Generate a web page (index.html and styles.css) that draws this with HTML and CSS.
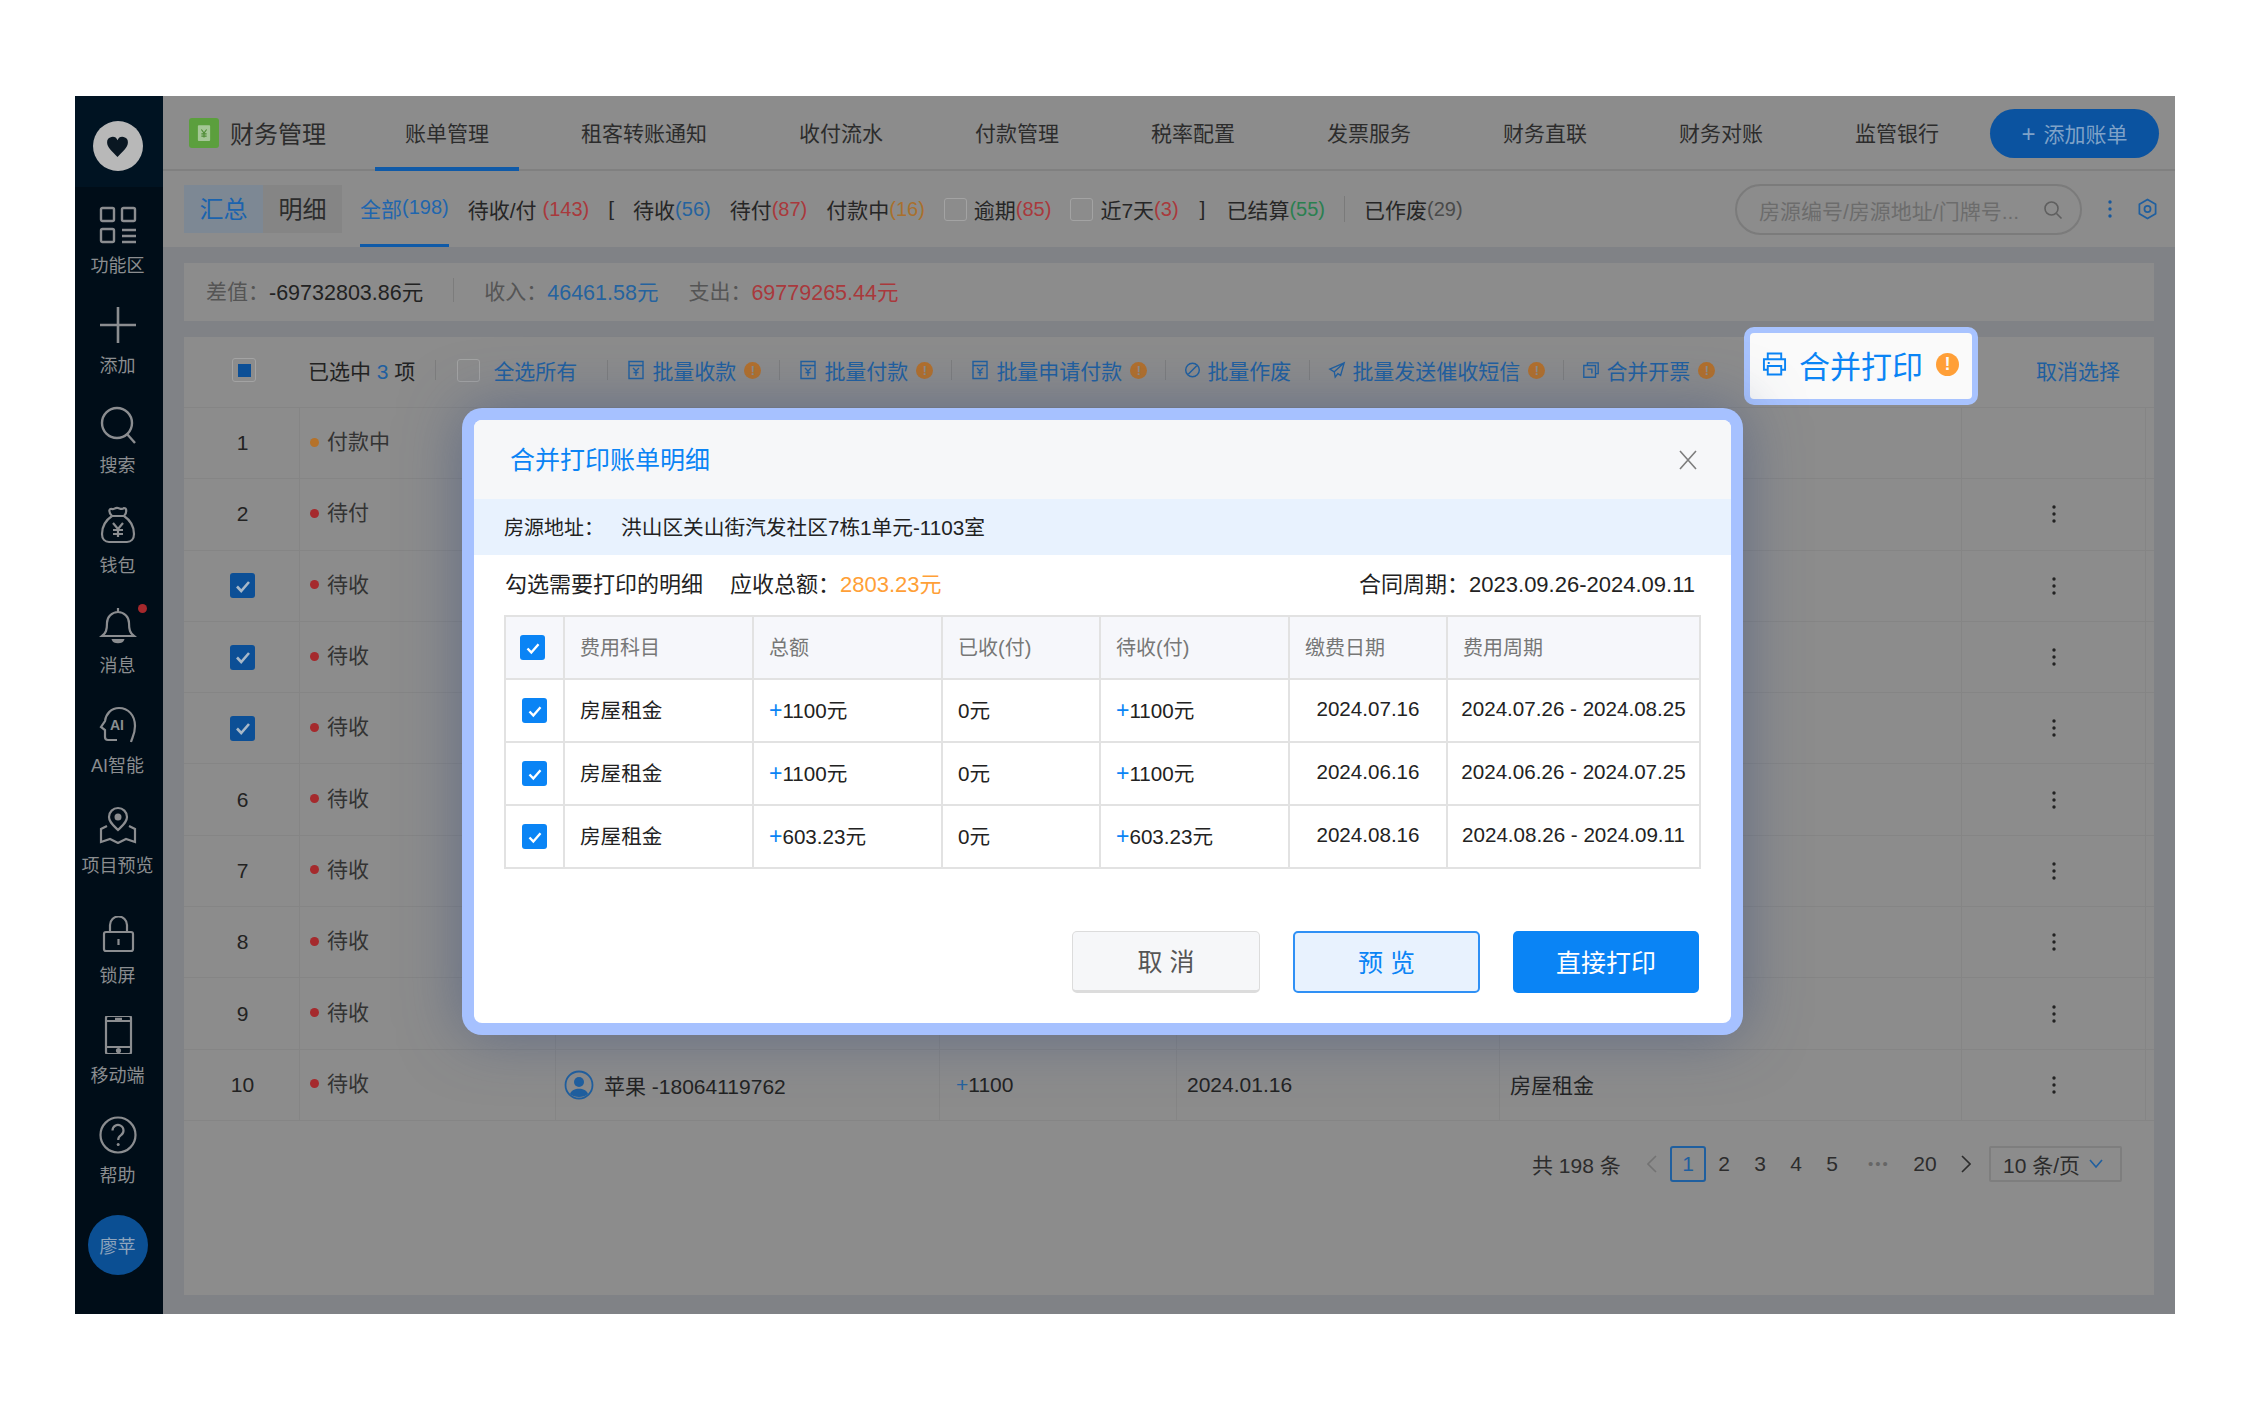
FILE: index.html
```html
<!doctype html>
<html>
  <head>
    <meta charset="utf-8">
    <title>财务管理 - 账单管理</title>
    <link rel="stylesheet" href="styles.css">
  </head>
  <body>
    <svg class="icon-defs">
      <symbol id="doc" viewBox="0 0 20 20"><path d="M3 1.500h14v17H3zM3 5.500h14M7 8l3 3 3-3M10 11v5M7.500 12.500h5" fill="none" stroke="currentColor" stroke-width="1.400"/></symbol>
      <symbol id="dots" viewBox="0 0 6 20"><circle cx="3" cy="3" r="1.700" fill="currentColor"/><circle cx="3" cy="10" r="1.700" fill="currentColor"/><circle cx="3" cy="17" r="1.700" fill="currentColor"/></symbol>
      <symbol id="tick" viewBox="0 0 24 24"><path d="M6 12.500l4.200 4.500L18 8" fill="none" stroke="currentColor" stroke-width="2.600"/></symbol>
    </svg>

    <div class="app">
      <aside class="sidebar">
        <div class="side-logo">
          <div class="logo-circle">
            <svg viewBox="0 0 24 24" width="25" height="25"><path d="M12 22C7 17 2 13 2 8a5.200 5.200 0 0 1 10-2 5.200 5.200 0 0 1 10 2c0 5-5 9-10 14z" fill="#0a1722"/></svg>
          </div>
        </div>
        <nav class="side-nav">
          <div class="side-item">
            <svg viewBox="0 0 38 38" width="38" height="38" fill="none" stroke="currentColor" stroke-width="2.400"><rect x="2" y="2" width="13" height="13" rx="1.500"/><rect x="23" y="2" width="13" height="13" rx="1.500"/><rect x="2" y="23" width="13" height="13" rx="1.500"/><path d="M23 24h14M23 30h14M23 36h14"/></svg>
            <span>功能区</span>
          </div>
          <div class="side-item">
            <svg viewBox="0 0 38 38" width="38" height="38" fill="none" stroke="currentColor" stroke-width="2.600"><path d="M19 1v36M1 19h36"/></svg>
            <span>添加</span>
          </div>
          <div class="side-item">
            <svg viewBox="0 0 38 38" width="38" height="38" fill="none" stroke="currentColor" stroke-width="2.400"><circle cx="18" cy="17" r="15"/><path d="M28 28l8 9"/></svg>
            <span>搜索</span>
          </div>
          <div class="side-item">
            <svg viewBox="0 0 38 38" width="38" height="38" fill="none" stroke="currentColor" stroke-width="2.200"><path d="M13 10C9 6 10 2 13 3c2 1 3-2 6-1s4 2 6 0c3 0 3 5 0 8M13 10h12M13 10C7 14 3 21 3 28c0 5 3 8 7 8h18c4 0 7-3 7-8 0-7-4-14-10-18"/><path d="M14 17l5 6 5-6M19 23v8M14 24h10M14 28h10"/></svg>
            <span>钱包</span>
          </div>
          <div class="side-item">
            <i class="side-badge"></i>
            <svg viewBox="0 0 38 38" width="38" height="38" fill="none" stroke="currentColor" stroke-width="2.200"><path d="M3 30c4-3 5-6 5-13a11 11 0 0 1 22 0c0 7 1 10 5 13zM19 2v4"/><path d="M14 34h10c-1 3-9 3-10 0z" fill="currentColor"/></svg>
            <span>消息</span>
          </div>
          <div class="side-item">
            <svg viewBox="0 0 38 38" width="38" height="38" fill="none" stroke="currentColor" stroke-width="2.200"><path d="M32 36c1-4 4-8 4-16C36 9 29 2 20 2 12 2 7 8 6 15l-4 6 4 3v7c0 2 1 3 3 3h9"/><text x="11" y="24" class="ai-text">AI</text></svg>
            <span>AI智能</span>
          </div>
          <div class="side-item">
            <svg viewBox="0 0 38 38" width="38" height="38" fill="none" stroke="currentColor" stroke-width="2.200"><path d="M19 24c-5-5-9-8-9-13a9 9 0 0 1 18 0c0 5-4 8-9 13z"/><circle cx="19" cy="11" r="2.400" fill="currentColor"/><path d="M8 20l-6 3v13l9-3 8 4 8-4 9 3V23l-6-3"/></svg>
            <span>项目预览</span>
          </div>
          <div class="side-item side-item-lock">
            <svg viewBox="0 0 38 38" width="38" height="38" fill="none" stroke="currentColor" stroke-width="2.200"><rect x="5" y="16" width="29" height="19" rx="2"/><path d="M11 16V9a8 8 0 0 1 17 0v7M19.500 23v6"/></svg>
            <span>锁屏</span>
          </div>
          <div class="side-item">
            <svg viewBox="0 0 38 38" width="38" height="38" fill="none" stroke="currentColor" stroke-width="2.200"><rect x="7" y="0" width="25" height="38" rx="2"/><path d="M7 5h25M7 31h25M16 2.800h7"/><circle cx="19.500" cy="34.500" r="1.500" fill="currentColor"/></svg>
            <span>移动端</span>
          </div>
          <div class="side-item">
            <svg viewBox="0 0 38 38" width="38" height="38" fill="none" stroke="currentColor" stroke-width="2.200"><circle cx="19" cy="19" r="17.500"/><path d="M13.500 14.500a5.500 5.500 0 1 1 8.500 4.600c-2 1.300-2.800 2.400-2.800 4.900"/><circle cx="19.200" cy="28.500" r="1.500" fill="currentColor" stroke="none"/></svg>
            <span>帮助</span>
          </div>
        </nav>
        <div class="avatar">廖苹</div>
      </aside>

      <main class="main">
        <header class="topbar">
          <div class="brand">
            <div class="brand-icon">
              <svg viewBox="0 0 16 20" width="14" height="18"><rect x="1" y="1" width="14" height="18" rx="1" fill="#a5c796"/><path d="M5 6l3 4 3-4M8 10v5M5 11h6M5 13.500h6" fill="none" stroke="#4f8c34" stroke-width="1.300"/></svg>
            </div>
            <span>财务管理</span>
          </div>
          <nav class="top-tabs">
            <a class="top-tab active">账单管理</a>
            <a class="top-tab">租客转账通知</a>
            <a class="top-tab">收付流水</a>
            <a class="top-tab">付款管理</a>
            <a class="top-tab">税率配置</a>
            <a class="top-tab">发票服务</a>
            <a class="top-tab">财务直联</a>
            <a class="top-tab">财务对账</a>
            <a class="top-tab">监管银行</a>
          </nav>
          <button class="add-button"><span class="add-plus">+</span>添加账单</button>
        </header>

        <section class="subbar">
          <div class="view-switch">
            <span class="view-btn active">汇总</span>
            <span class="view-btn">明细</span>
          </div>
          <div class="filters">
            <span class="filter active">全部<em>(198)</em></span>
            <span class="filter">待收/付<em class="red spaced">(143)</em></span>
            <span class="filter bracket-open">[</span>
            <span class="filter">待收<em class="blue">(56)</em></span>
            <span class="filter">待付<em class="red">(87)</em></span>
            <span class="filter">付款中<em class="orange">(16)</em></span>
            <span class="filter"><i class="check-empty small"></i>逾期<em class="red">(85)</em></span>
            <span class="filter"><i class="check-empty small"></i>近7天<em class="red">(3)</em></span>
            <span class="filter bracket-close">]</span>
            <span class="filter">已结算<em class="green">(55)</em></span>
            <span class="filter-line"></span>
            <span class="filter">已作废<em class="muted">(29)</em></span>
          </div>
          <div class="search">
            <span class="search-text">房源编号/房源地址/门牌号...</span>
            <svg viewBox="0 0 20 20" width="20" height="20" fill="none" stroke="#5f5f5f" stroke-width="1.600"><circle cx="8.500" cy="8.500" r="6.500"/><path d="M13.500 13.500l5 5"/></svg>
          </div>
          <svg class="more-blue" width="6" height="20"><use href="#dots"/></svg>
          <svg class="gear" viewBox="0 0 22 24" width="21" height="24" fill="none" stroke="#1f5f9f" stroke-width="1.800"><path d="M11 2l8.500 5v10L11 22l-8.500-5V7z" stroke-linejoin="round"/><circle cx="11" cy="12" r="3.200"/></svg>
        </section>

        <section class="stats">
          <span class="stat-label">差值：</span><span class="stat-value">-69732803.86元</span>
          <span class="stat-line"></span>
          <span class="stat-label">收入：</span><span class="stat-value blue">46461.58元</span>
          <span class="stat-label stat-gap">支出：</span><span class="stat-value red">69779265.44元</span>
        </section>

        <section class="bill-card">
          <div class="toolbar">
            <span class="check-some"><i></i></span>
            <span class="selected">已选中 <b>3</b> 项</span>
            <span class="tool-line first-line"></span>
            <span class="check-empty"></span>
            <span class="select-all">全选所有</span>
            <span class="tool-line all-line"></span>
            <span class="tool"><svg width="20" height="20"><use href="#doc"/></svg>批量收款<i class="warn">!</i></span>
            <span class="tool-line"></span>
            <span class="tool"><svg width="20" height="20"><use href="#doc"/></svg>批量付款<i class="warn">!</i></span>
            <span class="tool-line"></span>
            <span class="tool"><svg width="20" height="20"><use href="#doc"/></svg>批量申请付款<i class="warn">!</i></span>
            <span class="tool-line"></span>
            <span class="tool">
              <svg viewBox="0 0 20 20" width="17" height="20" fill="none" stroke="currentColor" stroke-width="1.700"><circle cx="10" cy="10" r="8"/><path d="M5 15L15 5"/></svg>批量作废
            </span>
            <span class="tool-line"></span>
            <span class="tool">
              <svg viewBox="0 0 20 20" width="18" height="20" fill="none" stroke="currentColor" stroke-width="1.500"><path d="M18 2L2 9l5 3 1 6 3-4 3 2zM7 12l11-10"/></svg>批量发送催收短信<i class="warn">!</i>
            </span>
            <span class="tool-line"></span>
            <span class="tool">
              <svg viewBox="0 0 20 20" width="18" height="20" fill="none" stroke="currentColor" stroke-width="1.500"><path d="M2 5h13v13H2zM6 5V2h12v12h-3M6 9h5v5"/></svg>合并开票<i class="warn">!</i>
            </span>
            <span class="cancel-select">取消选择</span>
            <div class="merge-print">
              <svg viewBox="0 0 26 26" width="25" height="26" fill="none" stroke="currentColor" stroke-width="2"><path d="M6 8V2h14v6M6 19H2V8h22v11h-4M6 15h14v9H6zM6 12h2"/></svg>
              <span>合并打印</span>
              <i class="warn big">!</i>
            </div>
          </div>

          <div class="bill-row"><div class="cell">1</div><div class="cell status"><i class="dot pay"></i>付款中</div><div class="cell"></div><div class="cell"></div><div class="cell"></div><div class="cell"></div><div class="cell"></div></div>
          <div class="bill-row"><div class="cell">2</div><div class="cell status"><i class="dot"></i>待付</div><div class="cell"></div><div class="cell"></div><div class="cell"></div><div class="cell"></div><div class="cell"><svg class="more" width="6" height="20"><use href="#dots"/></svg></div></div>
          <div class="bill-row"><div class="cell"><span class="check-dim"><svg width="24" height="24"><use href="#tick"/></svg></span></div><div class="cell status"><i class="dot"></i>待收</div><div class="cell"></div><div class="cell"></div><div class="cell"></div><div class="cell"></div><div class="cell"><svg class="more" width="6" height="20"><use href="#dots"/></svg></div></div>
          <div class="bill-row"><div class="cell"><span class="check-dim"><svg width="24" height="24"><use href="#tick"/></svg></span></div><div class="cell status"><i class="dot"></i>待收</div><div class="cell"></div><div class="cell"></div><div class="cell"></div><div class="cell"></div><div class="cell"><svg class="more" width="6" height="20"><use href="#dots"/></svg></div></div>
          <div class="bill-row"><div class="cell"><span class="check-dim"><svg width="24" height="24"><use href="#tick"/></svg></span></div><div class="cell status"><i class="dot"></i>待收</div><div class="cell"></div><div class="cell"></div><div class="cell"></div><div class="cell"></div><div class="cell"><svg class="more" width="6" height="20"><use href="#dots"/></svg></div></div>
          <div class="bill-row"><div class="cell">6</div><div class="cell status"><i class="dot"></i>待收</div><div class="cell"></div><div class="cell"></div><div class="cell"></div><div class="cell"></div><div class="cell"><svg class="more" width="6" height="20"><use href="#dots"/></svg></div></div>
          <div class="bill-row"><div class="cell">7</div><div class="cell status"><i class="dot"></i>待收</div><div class="cell"></div><div class="cell"></div><div class="cell"></div><div class="cell"></div><div class="cell"><svg class="more" width="6" height="20"><use href="#dots"/></svg></div></div>
          <div class="bill-row"><div class="cell">8</div><div class="cell status"><i class="dot"></i>待收</div><div class="cell"></div><div class="cell"></div><div class="cell"></div><div class="cell"></div><div class="cell"><svg class="more" width="6" height="20"><use href="#dots"/></svg></div></div>
          <div class="bill-row"><div class="cell">9</div><div class="cell status"><i class="dot"></i>待收</div><div class="cell"></div><div class="cell"></div><div class="cell"></div><div class="cell"></div><div class="cell"><svg class="more" width="6" height="20"><use href="#dots"/></svg></div></div>
          <div class="bill-row">
            <div class="cell">10</div>
            <div class="cell status"><i class="dot"></i>待收</div>
            <div class="cell text-cell tenant">
              <svg viewBox="0 0 30 30" width="30" height="30"><circle cx="15" cy="15" r="13.500" fill="none" stroke="#1f5f9f" stroke-width="1.800"/><circle cx="15" cy="12" r="5" fill="#1f5f9f"/><path d="M6 24c2-7 16-7 18 0-4 4-14 4-18 0z" fill="#1f5f9f"/></svg>
              苹果 -18064119762
            </div>
            <div class="cell text-cell money"><em class="blue">+</em>1100</div>
            <div class="cell text-cell date">2024.01.16</div>
            <div class="cell text-cell subject">房屋租金</div>
            <div class="cell"><svg class="more" width="6" height="20"><use href="#dots"/></svg></div>
          </div>

          <div class="pager">
            <span class="pager-total">共 198 条</span>
            <span class="pager-arrow dim">
              <svg viewBox="0 0 10 18" width="10" height="18" fill="none" stroke="currentColor" stroke-width="1.600"><path d="M9 1L1 9l8 8"/></svg>
            </span>
            <span class="page current">1</span>
            <span class="page">2</span>
            <span class="page">3</span>
            <span class="page">4</span>
            <span class="page">5</span>
            <span class="page ellipsis">•••</span>
            <span class="page wide">20</span>
            <span class="pager-arrow">
              <svg viewBox="0 0 10 18" width="10" height="18" fill="none" stroke="currentColor" stroke-width="1.600"><path d="M1 1l8 8-8 8"/></svg>
            </span>
            <span class="page-size">10 条/页
              <svg viewBox="0 0 14 10" width="14" height="10" fill="none" stroke="#1f5f9f" stroke-width="1.600"><path d="M1 1l6 7 6-7"/></svg>
            </span>
          </div>
        </section>
      </main>

      <div class="dialog">
        <div class="dialog-inner">
          <div class="dialog-head">
            <h2>合并打印账单明细</h2>
            <svg viewBox="0 0 20 20" width="20" height="20" fill="none" stroke="#7d7d7d" stroke-width="1.600"><path d="M2 1l16 18M18 1L2 19"/></svg>
          </div>
          <div class="dialog-address"><span>房源地址：</span><span class="address-value">洪山区关山街汽发社区7栋1单元-1103室</span></div>
          <div class="dialog-info">
            <span class="info-tip">勾选需要打印的明细</span>
            <span class="info-total">应收总额：<em>2803.23元</em></span>
            <span class="info-period">合同周期：2023.09.26-2024.09.11</span>
          </div>
          <table class="detail-table">
            <colgroup>
              <col class="col-check"><col class="col-wide"><col class="col-wide"><col class="col-mid"><col class="col-wide"><col class="col-mid"><col class="col-period">
            </colgroup>
            <thead>
              <tr>
                <th class="cb-cell head-cb"><span class="check-on"><svg width="22" height="22"><use href="#tick"/></svg></span></th>
                <th>费用科目</th><th>总额</th><th>已收(付)</th><th>待收(付)</th><th>缴费日期</th><th>费用周期</th>
              </tr>
            </thead>
            <tbody>
              <tr>
                <td class="cb-cell"><span class="check-on"><svg width="22" height="22"><use href="#tick"/></svg></span></td>
                <td>房屋租金</td><td><em class="plus">+</em>1100元</td><td>0元</td><td><em class="plus">+</em>1100元</td><td class="center">2024.07.16</td><td class="center">2024.07.26 - 2024.08.25</td>
              </tr>
              <tr>
                <td class="cb-cell"><span class="check-on"><svg width="22" height="22"><use href="#tick"/></svg></span></td>
                <td>房屋租金</td><td><em class="plus">+</em>1100元</td><td>0元</td><td><em class="plus">+</em>1100元</td><td class="center">2024.06.16</td><td class="center">2024.06.26 - 2024.07.25</td>
              </tr>
              <tr>
                <td class="cb-cell"><span class="check-on"><svg width="22" height="22"><use href="#tick"/></svg></span></td>
                <td>房屋租金</td><td><em class="plus">+</em>603.23元</td><td>0元</td><td><em class="plus">+</em>603.23元</td><td class="center">2024.08.16</td><td class="center">2024.08.26 - 2024.09.11</td>
              </tr>
            </tbody>
          </table>
          <div class="dialog-actions">
            <button class="btn btn-cancel">取 消</button>
            <button class="btn btn-preview">预 览</button>
            <button class="btn btn-print">直接打印</button>
          </div>
        </div>
      </div>
    </div>
  </body>
</html>
```

FILE: styles.css
```css
* {
  box-sizing: border-box;
}
body {
  margin: 0;
  padding: 96px 75px 0;
  background-color: #fff;
  font-family: "Liberation Sans", "Noto Sans CJK SC", sans-serif;
  font-size: 20px;
  color: #222;
}
em {
  font-style: normal;
}
i {
  font-style: normal;
}
.icon-defs {
  display: none;
}
.red {
  color: #a9393c;
}
.blue {
  color: #25639f;
}
.orange {
  color: #a9702d;
}
.green {
  color: #2a8050;
}
.muted {
  color: #4a4a4a;
}

.app {
  position: relative;
  display: flex;
  width: 2100px;
  height: 1218px;
  overflow: hidden;
}

/* sidebar */
.sidebar {
  flex: 0 0 88px;
  padding-right: 3px;
  background-color: #000d18;
  color: #8b8d90;
  display: flex;
  flex-direction: column;
  align-items: center;
}
.side-logo {
  width: 88px;
  height: 91px;
  margin-right: -3px;
  padding: 9px 3px 0 0;
  background-color: #001322;
  display: flex;
  align-items: center;
  justify-content: center;
}
.logo-circle {
  width: 50px;
  height: 50px;
  border-radius: 50%;
  background-color: #b8b8b8;
  display: flex;
  align-items: center;
  justify-content: center;
}
.side-nav {
  padding-top: 18px;
  width: 100%;
}
.side-item {
  position: relative;
  height: 100px;
  display: flex;
  flex-direction: column;
  align-items: center;
  gap: 10px;
  font-size: 18px;
  line-height: 24px;
  color: #8b8d90;
  white-space: nowrap;
}
.side-item svg {
  flex: 0 0 38px;
  margin-top: 1px;
}
.side-item-lock {
  margin-top: 10px;
}
.side-badge {
  position: absolute;
  top: -1px;
  left: 63px;
  width: 9px;
  height: 9px;
  border-radius: 50%;
  background-color: #a5282c;
}
.ai-text {
  font-size: 14px;
  font-weight: bold;
  fill: currentColor;
  stroke: none;
}
.avatar {
  width: 60px;
  height: 60px;
  border-radius: 50%;
  background-color: #0b4f93;
  color: #8fa5bd;
  font-size: 18px;
  display: flex;
  align-items: center;
  justify-content: center;
}

/* main area */
.main {
  flex: 1;
  background-color: #808286;
  display: flex;
  flex-direction: column;
  padding-bottom: 19px;
}
.topbar {
  height: 75px;
  background-color: #8c8c8c;
  border-bottom: 2px solid #808080;
  display: flex;
  align-items: center;
  padding-left: 26px;
  position: relative;
}
.brand {
  display: flex;
  align-items: center;
  gap: 11px;
  font-size: 24px;
  width: 186px;
  color: #2c2c2c;
}
.brand-icon {
  width: 30px;
  height: 30px;
  border-radius: 3px;
  background-color: #5b9f3d;
  display: flex;
  align-items: center;
  justify-content: center;
}
.top-tabs {
  display: flex;
  gap: 32px;
  height: 73px;
}
.top-tab {
  padding: 0 30px;
  font-size: 21px;
  line-height: 75px;
  height: 75px;
  color: #2c2c2c;
}
.top-tab.active {
  border-bottom: 4px solid #0f5aa8;
}
.add-button {
  position: absolute;
  right: 16px;
  top: 13px;
  width: 169px;
  height: 49px;
  padding-bottom: 3px;
  border: none;
  border-radius: 25px;
  background-color: #0b53a0;
  color: #7fa2c8;
  font-family: inherit;
  font-size: 21px;
}
.add-plus {
  margin-right: 8px;
  font-size: 24px;
}

.subbar {
  height: 76px;
  background-color: #8c8c8c;
  display: flex;
  align-items: center;
  padding-left: 21px;
  position: relative;
}
.view-switch {
  display: flex;
  height: 48px;
}
.view-btn {
  width: 79px;
  line-height: 50px;
  text-align: center;
  font-size: 24px;
  background-color: #858585;
  color: #2c2c2c;
}
.view-btn.active {
  background-color: #7d8894;
  color: #1a63ae;
}
.filters {
  display: flex;
  align-items: center;
  height: 76px;
  margin-left: 18px;
  gap: 19px;
  font-size: 21px;
  white-space: nowrap;
  color: #262626;
}
.filters em {
  font-size: 20px;
}
.filter {
  display: flex;
  align-items: center;
}
.filter em.spaced {
  margin-left: 6px;
}
.filter.active {
  color: #1f66ae;
  height: 76px;
  border-bottom: 3px solid #0f5aa8;
}
.bracket-close {
  padding: 0 2px;
}
.filter-line {
  width: 1px;
  height: 26px;
  background-color: #7a7a7a;
}
.check-empty {
  display: inline-block;
  flex: 0 0 23px;
  width: 23px;
  height: 23px;
  border: 1px solid #a3a3a3;
  border-radius: 3px;
  background-color: #8c8c8c;
}
.check-empty.small {
  margin-right: 7px;
}
.search {
  position: absolute;
  left: 1572px;
  top: 13px;
  width: 347px;
  height: 51px;
  border: 2px solid #7b7b7b;
  border-radius: 26px;
  display: flex;
  align-items: center;
  justify-content: space-between;
  padding: 0 17px 0 22px;
  color: #6c6c6c;
}
.search-text {
  font-size: 21px;
  white-space: nowrap;
}
.more-blue {
  position: absolute;
  left: 1944px;
  top: 28px;
  color: #17589c;
}
.gear {
  position: absolute;
  left: 1974px;
  top: 26px;
}

.stats {
  margin: 16px 21px 0 21px;
  height: 58px;
  padding: 0 0 4px 22px;
  background-color: #8c8c8c;
  display: flex;
  align-items: center;
  font-size: 21.500px;
  color: #222;
}
.stat-label {
  font-size: 21px;
  color: #555;
}
.stat-line {
  width: 1px;
  height: 24px;
  margin: 0 30px;
  background-color: #7c7c7c;
}
.stat-gap {
  margin-left: 30px;
}

/* table card */
.bill-card {
  flex: 1;
  margin: 16px 21px 0 21px;
  background-color: #8c8c8c;
}
.toolbar {
  position: relative;
  height: 71px;
  padding: 0 0 4px 48px;
  display: flex;
  align-items: center;
  font-size: 21px;
  color: #1f5f9f;
  white-space: nowrap;
  border-bottom: 1px solid #858585;
}
.check-some {
  width: 24px;
  height: 24px;
  border: 1px solid #a3a3a3;
  border-radius: 3px;
  display: flex;
  align-items: center;
  justify-content: center;
}
.check-some i {
  width: 13px;
  height: 13px;
  background-color: #0c4f96;
}
.selected {
  margin-left: 52px;
  color: #222;
}
.selected b {
  font-weight: normal;
  color: #1f5f9f;
}
.tool-line {
  width: 1px;
  height: 20px;
  margin: 0 18px;
  background-color: #7d7d7d;
}
.first-line {
  margin: 0 21px 0 20px;
}
.all-line {
  margin-left: 30px;
}
.select-all {
  margin-left: 13px;
}
.tool {
  display: flex;
  align-items: center;
  gap: 6px;
}
.warn {
  width: 17px;
  height: 17px;
  margin-left: 2px;
  border-radius: 50%;
  background-color: #b3702b;
  color: #8c8c8c;
  font-size: 13px;
  font-weight: bold;
  line-height: 17px;
  text-align: center;
}
.cancel-select {
  position: absolute;
  right: 34px;
}
.merge-print {
  position: absolute;
  left: 1560px;
  top: -10px;
  width: 234px;
  height: 78px;
  padding: 0 0 4px 12px;
  border: 6px solid #a8c3ff;
  border-radius: 10px;
  background-color: #fafafa;
  color: #0a84f5;
  display: flex;
  align-items: center;
  gap: 12px;
  font-size: 31px;
}
.warn.big {
  width: 23px;
  height: 23px;
  margin-left: 1px;
  background-color: #ff9f37;
  color: #fafafa;
  font-size: 18px;
  line-height: 23px;
}

.bill-row {
  display: grid;
  grid-template-columns: 116px 256px 384px 237px 323px 462px 184px;
  height: 71.300px;
  border-bottom: 1px solid #858585;
  font-size: 21px;
}
.cell {
  display: flex;
  align-items: center;
  justify-content: center;
  border-right: 1px solid #858585;
  color: #222;
}
.bill-row .cell:first-child {
  padding-left: 2px;
}
.status {
  justify-content: flex-start;
  padding-left: 10px;
  gap: 8px;
  color: #333;
  line-height: 22px;
  padding-bottom: 2px;
}
.dot {
  width: 9px;
  height: 9px;
  border-radius: 50%;
  background-color: #a52a2d;
}
.dot.pay {
  background-color: #b5722a;
}
.check-dim {
  width: 25px;
  height: 25px;
  border-radius: 3px;
  background-color: #0c4f96;
  color: #a8b8c8;
  display: flex;
  align-items: center;
  justify-content: center;
}
.more {
  color: #222;
}
.text-cell {
  justify-content: flex-start;
  font-size: 21px;
}
.tenant {
  gap: 10px;
  padding-left: 8px;
}
.money {
  padding-left: 16px;
}
.date {
  padding-left: 10px;
}
.subject {
  padding: 0 0 2px 10px;
}

.pager {
  display: flex;
  align-items: center;
  height: 36px;
  margin-top: 25px;
  padding-left: 1348px;
  font-size: 21px;
  color: #2c2c2c;
}
.pager-total {
  width: 115px;
  white-space: nowrap;
}
.pager-arrow {
  width: 18px;
  display: flex;
  color: #2c2c2c;
}
.pager-arrow.dim {
  color: #737373;
  margin-right: 5px;
}
.page {
  width: 36px;
  text-align: center;
}
.page.current {
  height: 36px;
  line-height: 32px;
  border: 2px solid #1f5f9f;
  border-radius: 3px;
  color: #1f5f9f;
}
.page.ellipsis {
  width: 58px;
  font-size: 15px;
  color: #666;
  letter-spacing: 2px;
}
.page.wide {
  width: 34px;
  margin-right: 19px;
}
.page-size {
  display: flex;
  align-items: center;
  justify-content: space-between;
  width: 133px;
  height: 36px;
  margin-left: 10px;
  padding: 0 17px 0 12px;
  border: 2px solid #7e7e7e;
  border-radius: 2px;
  white-space: nowrap;
}

/* dialog */
.dialog {
  position: absolute;
  left: 387px;
  top: 312px;
  width: 1281px;
  height: 627px;
  padding: 12px;
  border-radius: 20px;
  background-color: #a6c1ff;
  box-shadow: 0 0 60px rgba(60, 80, 125, 0.55);
}
.dialog-inner {
  height: 100%;
  border-radius: 8px;
  overflow: hidden;
  background-color: #fff;
}
.dialog-head {
  height: 79px;
  padding: 0 33px 4px 36px;
  background-color: #f6f7f9;
  display: flex;
  align-items: center;
  justify-content: space-between;
}
.dialog-head h2 {
  margin: 0;
  font-size: 25px;
  font-weight: normal;
  color: #0a84f5;
}
.dialog-head svg {
  margin-top: 4px;
}
.dialog-address {
  height: 56px;
  padding: 0 0 2px 30px;
  background-color: #e8f2fe;
  display: flex;
  align-items: center;
  gap: 17px;
  font-size: 20px;
  color: #222;
}
.address-value {
  font-size: 20.700px;
}
.dialog-info {
  height: 60px;
  display: flex;
  align-items: center;
  padding: 0 36px 7px 31px;
  font-size: 22px;
  color: #222;
}
.info-total {
  margin-left: 27px;
}
.info-total em {
  color: #ff9f37;
}
.info-period {
  margin-left: auto;
}
.detail-table {
  width: 1194px;
  margin-left: 30px;
  border-collapse: collapse;
  table-layout: fixed;
  font-size: 20.600px;
  color: #222;
}
.col-check {
  width: 59px;
}
.col-wide {
  width: 189px;
}
.col-mid {
  width: 158px;
}
.col-period {
  width: 253px;
}
.detail-table th,
.detail-table td {
  height: 63px;
  padding: 0 0 3px 15px;
  border: 2px solid #e2e2e2;
  text-align: left;
  font-weight: normal;
}
.detail-table th {
  background-color: #f6f7fb;
  color: #777;
  font-size: 20px;
}
.detail-table .cb-cell {
  padding: 0 0 0 16px;
}
.detail-table .head-cb {
  padding-left: 14px;
}
.detail-table .center {
  padding: 0 0 3px;
  text-align: center;
}
.check-on {
  width: 25px;
  height: 25px;
  border-radius: 3px;
  background-color: #0a84f5;
  color: #fff;
  display: flex;
  align-items: center;
  justify-content: center;
}
.plus {
  color: #0a84f5;
  font-size: 23px;
}
.dialog-actions {
  display: flex;
  justify-content: flex-end;
  gap: 33px;
  margin-top: 62px;
  padding-right: 32px;
}
.btn {
  width: 187px;
  height: 62px;
  padding-bottom: 3px;
  border-radius: 5px;
  font-family: inherit;
  font-size: 25px;
}
.btn-cancel {
  width: 188px;
  border: 1px solid #dcdcdc;
  border-bottom: 3px solid #dcdcdc;
  background-color: #f6f7f9;
  color: #555;
}
.btn-preview {
  border: 2px solid #2f90f5;
  background-color: #e8f2fe;
  color: #0a84f5;
}
.btn-print {
  width: 186px;
  border: none;
  background-color: #0a84f5;
  color: #fff;
}
```
